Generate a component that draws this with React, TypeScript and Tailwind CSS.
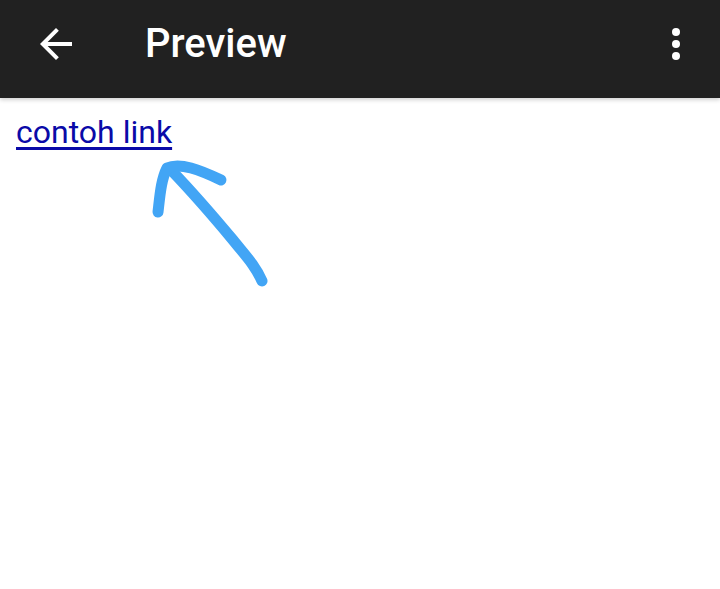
export default function App() {
  return (
    <div className="w-[720px] h-[589px] bg-white overflow-hidden font-['Roboto',sans-serif]">
      {/* top bar */}
      <div className="relative z-10 h-[98px] pb-[10px] bg-[#212121] flex items-center shadow-[0_2px_4px_rgba(0,0,0,0.18)]">
        <svg viewBox="0 0 24 24" className="w-12 h-12 ml-8 fill-white">
          <path d="M20 11H7.83l5.59-5.59L12 4l-8 8 8 8 1.41-1.41L7.83 13H20v-2z" />
        </svg>
        <span className="ml-[65px] text-white text-[40px] font-medium leading-none">Preview</span>
        <div className="ml-auto mr-[40px] flex flex-col gap-1 items-center">
          <span className="w-2 h-2 rounded-full bg-white" />
          <span className="w-2 h-2 rounded-full bg-white" />
          <span className="w-2 h-2 rounded-full bg-white" />
        </div>
      </div>

      {/* content */}
      <div className="relative px-4 pt-[14px]">
        <a href="#" className="text-[32px] leading-[40px] text-[#0a0aa8] underline underline-offset-[4px]">
          contoh link
        </a>
        <svg
          className="absolute left-0 top-0 pointer-events-none"
          width="720"
          height="491"
          viewBox="0 98 720 491"
        >
          <g fill="none" stroke="#42a5f5" strokeWidth="11" strokeLinecap="round" strokeLinejoin="round">
            <path d="M262 281 C255 265 245 255 233 240 C218 222 195 195 172 171" />
            <path d="M158 212 C160 195 161 180 167 168 C180 162 200 170 221 180" />
          </g>
        </svg>
      </div>
    </div>
  );
}
